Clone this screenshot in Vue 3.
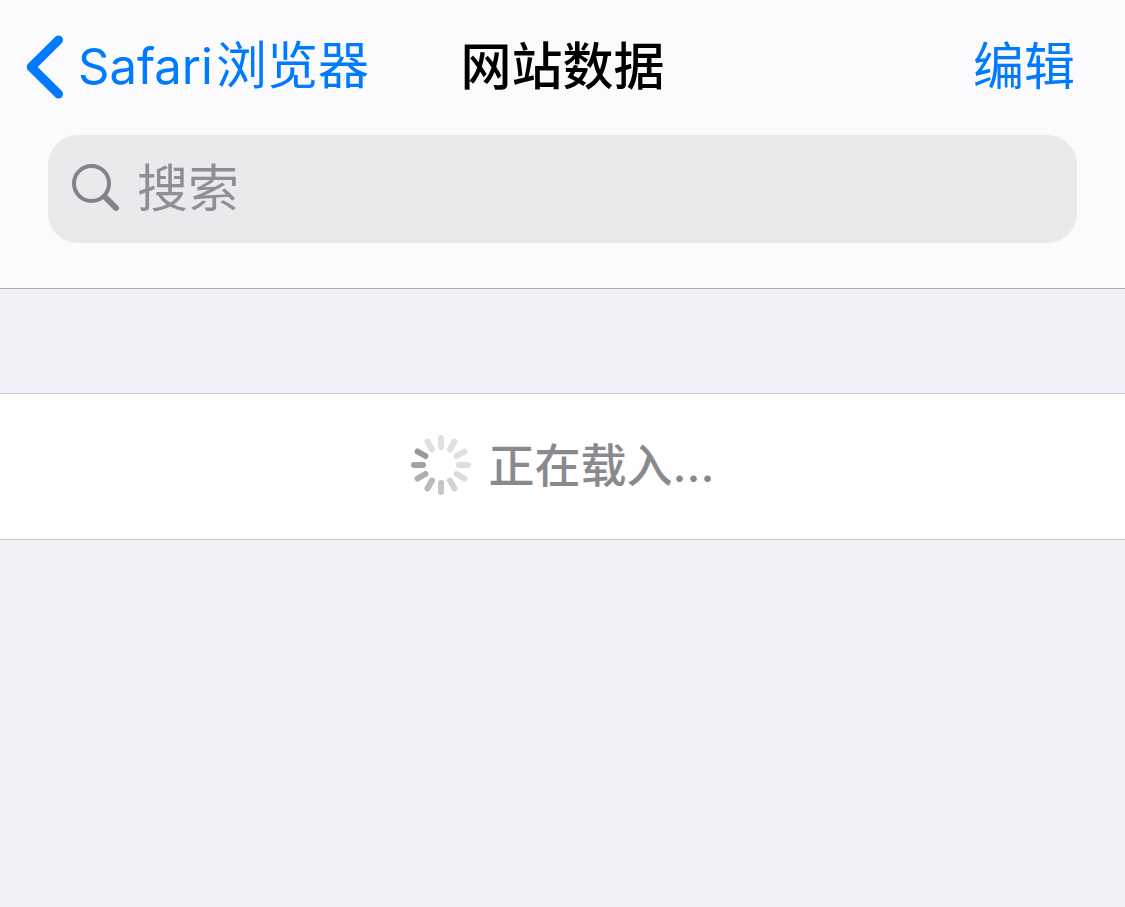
<script setup>
import { ref } from 'vue'

const query = ref('')
const blades = [
  '#e0e0e0', '#e0e0e0', '#dfdfdf', '#dedede', '#dcdcdd', '#d2d2d4',
  '#c6c6c9', '#bababd', '#aeaeb1', '#a3a3a6', '#99999c', '#e0e0e0',
]
</script>

<template>
  <div class="page">
    <header class="top">
      <nav class="bar">
        <a class="back" href="#">
          <svg class="chevron" viewBox="0 0 40 64" aria-hidden="true">
            <path d="M34.500 5 7.200 32 34.500 59" />
          </svg>
          <span><span class="latin">Safari</span>浏览器</span>
        </a>
        <h1>网站数据</h1>
        <button class="edit" type="button">编辑</button>
      </nav>
      <label class="search">
        <svg class="lens" viewBox="0 0 50 50" aria-hidden="true">
          <circle cx="20.500" cy="20.500" r="17.500" />
          <path d="M34 34 45 45" />
        </svg>
        <input v-model="query" type="text" placeholder="搜索" aria-label="搜索" />
      </label>
    </header>
    <main>
      <div class="loading" role="status">
        <svg class="spinner" viewBox="-30 -30 60 60" aria-hidden="true">
          <line
            v-for="(color, i) in blades"
            :key="i"
            y1="-27"
            y2="-18"
            :stroke="color"
            :transform="`rotate(${i * 30})`"
          />
        </svg>
        <span>正在载入...</span>
      </div>
    </main>
  </div>
</template>

<style>
body {
  margin: 0;
  background: #f1f0f6;
}
</style>

<style scoped>
.page {
  min-height: 100vh;
  background: #f1f0f6;
  font-family: Inter, "Noto Sans CJK SC", sans-serif;
}
.top {
  padding: 0 48px 45px;
  background: #fbfbfd;
  border-bottom: 1px solid #acacae;
}
.bar {
  display: grid;
  grid-template-columns: 1fr auto 1fr;
  align-items: center;
  height: 133px;
  margin: 0 -24px 2px;
}
.back,
.edit {
  color: #007aff;
  font-family: inherit;
  font-size: 51px;
  line-height: 72px;
  text-decoration: none;
  white-space: nowrap;
}
.back {
  display: flex;
  align-items: center;
  gap: 14px;
}
.latin {
  margin-right: 3px;
  font-size: 49px;
}
.chevron {
  width: 40px;
  height: 64px;
  fill: none;
  stroke: currentColor;
  stroke-width: 9;
  stroke-linecap: round;
  stroke-linejoin: round;
}
h1 {
  margin: 0;
  color: #000;
  font-size: 51px;
  line-height: 72px;
  font-weight: 500;
}
.edit {
  justify-self: end;
  padding: 0 26px 0 0;
  border: 0;
  background: none;
}
.search {
  display: flex;
  align-items: center;
  gap: 16px;
  height: 106px;
  padding: 0 23px 2px;
  border-radius: 30px;
  background: #eaeaec;
}
.lens {
  flex: none;
  width: 50px;
  height: 50px;
  fill: none;
  stroke: #848488;
  stroke-width: 4;
  stroke-linecap: round;
}
.lens path {
  stroke-width: 6;
}
input {
  flex: 1;
  min-width: 0;
  height: 80px;
  padding: 0;
  border: 0;
  outline: 0;
  background: none;
  color: #000;
  font-family: inherit;
  font-size: 51px;
}
input::placeholder {
  color: #8e8e93;
  opacity: 1;
}
main {
  display: flow-root;
}
.loading {
  display: flex;
  align-items: center;
  justify-content: center;
  gap: 18px;
  height: 141px;
  margin-top: 104px;
  padding-bottom: 4px;
  border-top: 1px solid #c8c8ca;
  border-bottom: 1px solid #c8c8ca;
  background: #fff;
  color: #8a8a8e;
  font-size: 46px;
  line-height: 60px;
  font-weight: 500;
}
.spinner {
  width: 60px;
  height: 60px;
  stroke-width: 6;
  stroke-linecap: round;
}
</style>
